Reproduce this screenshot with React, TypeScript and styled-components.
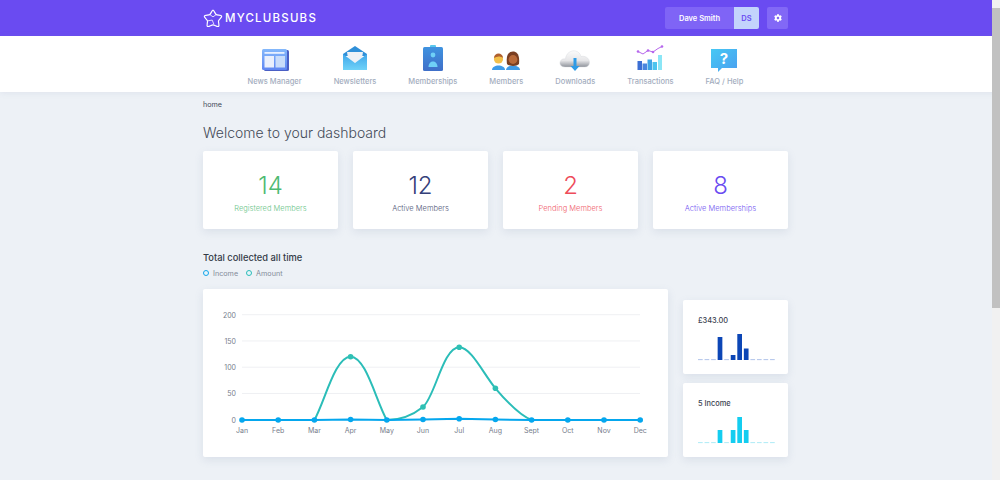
import { createGlobalStyle, styled } from "styled-components";
import { FaCog } from "react-icons/fa";

const GlobalStyle = createGlobalStyle`
  html {
    background: #edf1f6;
  }
  body {
    margin: 0;
    font-family: Inter, "Liberation Sans", sans-serif;
    color: #3b4250;
  }
`;

const Page = styled.div`
  height: 480px;
  overflow: hidden;
  padding-right: 9px;
  position: relative;
`;

const Scrollbar = styled.div`
  position: absolute;
  top: 0;
  right: 0;
  bottom: 0;
  width: 8px;
  background: #f1f1f1;
  padding-top: 8px;
  box-sizing: border-box;
`;

const ScrollThumb = styled.div`
  height: 300px;
  background: #c1c1c1;
`;

const Container = styled.div`
  width: 585px;
  margin: 0 auto;
`;

const TopBar = styled.header`
  height: 36px;
  margin-right: -9px;
  padding-right: 9px;
  background: #6a4bf1;
`;

const TopBarInner = styled(Container)`
  height: 100%;
  display: flex;
  align-items: center;
  justify-content: space-between;
`;

const Logo = styled.div`
  display: flex;
  align-items: center;
  gap: 2px;
  color: #fff;
  font-size: 11.5px;
  font-weight: 500;
  letter-spacing: 1.2px;
`;

const UserArea = styled.div`
  display: flex;
  gap: 8px;
`;

const UserButton = styled.div`
  display: flex;
  height: 22px;
  border-radius: 2px;
  overflow: hidden;
  font-size: 7.5px;
  font-weight: 600;
`;

const UserName = styled.div`
  width: 69px;
  display: flex;
  align-items: center;
  justify-content: center;
  background: #7f64f6;
  color: #fff;
`;

const UserInitials = styled.div`
  width: 25px;
  display: flex;
  align-items: center;
  justify-content: center;
  background: #c3d3fc;
  color: #6a4bf1;
`;

const GearButton = styled.div`
  width: 21px;
  height: 22px;
  border-radius: 2px;
  display: flex;
  align-items: center;
  justify-content: center;
  background: #8268f6;
  color: #fff;
  font-size: 8px;
`;

const NavBar = styled.nav`
  height: 56px;
  margin-right: -9px;
  padding-right: 9px;
  background: #fff;
  box-shadow: 0 1px 6px rgba(120, 135, 170, 0.12);
`;

const NavList = styled.div`
  height: 100%;
  display: flex;
  justify-content: center;
  gap: 32px;
`;

const NavItem = styled.div`
  display: flex;
  flex-direction: column;
  align-items: center;
  justify-content: flex-end;
  padding-bottom: 6px;
  gap: 5px;
  font-size: 7.5px;
  font-weight: 500;
  color: #a3adbe;
  white-space: nowrap;
`;

const NavIcon = styled.svg`
  display: block;
  width: 34px;
  height: 28px;
`;

const Breadcrumb = styled.div`
  padding-top: 8px;
  font-size: 7.2px;
  line-height: 10px;
  color: #444b58;
`;

const Title = styled.h1`
  margin: 12px 0 0;
  font-size: 14px;
  line-height: 22px;
  font-weight: 300;
  color: #444b58;
`;

const StatGrid = styled.div`
  display: grid;
  grid-template-columns: repeat(4, 135px);
  gap: 15px;
  margin-top: 7px;
`;

const StatCard = styled.div`
  height: 78px;
  background: #fff;
  border-radius: 2px;
  box-shadow: 0 3px 8px rgba(120, 135, 170, 0.16);
  display: flex;
  flex-direction: column;
  align-items: center;
  padding-top: 22px;
  box-sizing: border-box;
`;

const StatValue = styled.div<{ $color: string }>`
  font-size: 24px;
  line-height: 26px;
  font-weight: 300;
  color: ${(props) => props.$color};
`;

const StatLabel = styled.div<{ $color: string }>`
  margin-top: 4px;
  font-size: 7.5px;
  line-height: 12px;
  font-weight: 300;
  color: ${(props) => props.$color};
`;

const SectionTitle = styled.h2`
  margin: 22px 0 0;
  font-size: 9.3px;
  line-height: 14px;
  font-weight: 500;
  color: #333a47;
`;

const Legend = styled.div`
  display: flex;
  gap: 8px;
  margin-top: 2px;
  height: 12px;
`;

const LegendItem = styled.div`
  display: flex;
  align-items: center;
  gap: 4px;
  font-size: 7.2px;
  color: #848b99;
`;

const LegendDot = styled.span<{ $color: string }>`
  width: 4px;
  height: 4px;
  border-radius: 50%;
  border: 1.5px solid ${(props) => props.$color};
  background: #e8f4fa;
`;

const ChartRow = styled.div`
  display: flex;
  gap: 15px;
  margin-top: 10px;
`;

const ChartCard = styled.div`
  width: 465px;
  height: 168px;
  background: #fff;
  border-radius: 2px;
  box-shadow: 0 3px 8px rgba(120, 135, 170, 0.16);
`;

const ChartSvg = styled.svg`
  display: block;
  font-family: Inter, sans-serif;
  font-size: 7px;
  fill: #777e8c;
`;

const SideColumn = styled.div`
  width: 105px;
  display: flex;
  flex-direction: column;
  gap: 9px;
  padding-top: 11px;
`;

const MiniCard = styled.div`
  height: 74px;
  background: #fff;
  border-radius: 2px;
  box-shadow: 0 3px 8px rgba(120, 135, 170, 0.16);
  padding: 15px 0 0 15px;
  box-sizing: border-box;
`;

const MiniTitle = styled.div`
  font-size: 7.4px;
  line-height: 12px;
  font-weight: 500;
  color: #3b4250;
`;

const MiniSvg = styled.svg`
  display: block;
  margin-top: 6px;
`;

const months = ["Jan", "Feb", "Mar", "Apr", "May", "Jun", "Jul", "Aug", "Sept", "Oct", "Nov", "Dec"];

const monthX = (i: number) => 39 + i * 36.2;

// y positions relative to the card, read off the reference
const amountPoints = [131, 131, 131, 67.7, 131, 118, 58.3, 99.3, 131, 131, 131, 131];
const incomePoints = [131, 131, 131, 130.5, 131, 130.5, 129.7, 130.5, 131, 131, 131, 131];

const amountPath =
  "M39 131 H111.4 C122 112 132 67.7 147.6 67.7 C163 67.7 173 112 183.8 131 C197 131 210 126 220 118 " +
  "C232 108 240 58.3 256.2 58.3 C268 58.3 280 84 292.4 99.3 C304 113 318 127 328.6 131 H437";

const incomePath = `M${incomePoints.map((y, i) => `${monthX(i)} ${y}`).join(" L")}`;

function MiniBars({ bars, color, pale }: { bars: Record<number, number>; color: string; pale: string }) {
  return (
    <MiniSvg width="80" height="29">
      {months.map((month, i) =>
        bars[i] ? (
          <rect key={month} x={i * 6.55} y={27 - bars[i]} width="4.7" height={bars[i]} fill={color} />
        ) : (
          <rect key={month} x={i * 6.55} y="26.2" width="4.7" height="0.9" fill={pale} />
        )
      )}
    </MiniSvg>
  );
}

function NewsIcon() {
  return (
    <NavIcon viewBox="0 0 34 28">
      <defs>
        <linearGradient id="newsFill" x1="0" y1="0" x2="0" y2="1">
          <stop offset="0" stopColor="#84b8fb" />
          <stop offset="1" stopColor="#5f86f2" />
        </linearGradient>
      </defs>
      <rect x="6" y="6" width="25" height="21" rx="1.5" fill="#4a5fc4" />
      <rect x="4" y="5" width="25" height="21" rx="1.5" fill="url(#newsFill)" />
      <rect x="6.5" y="8" width="20" height="1.8" fill="#e8f0ff" />
      <rect x="6.5" y="12" width="9.5" height="11.5" fill="#e9effc" />
      <rect x="17.5" y="12" width="9.5" height="11.5" fill="#c8dcfa" />
    </NavIcon>
  );
}

function MailIcon() {
  return (
    <NavIcon viewBox="0 0 34 28">
      <defs>
        <linearGradient id="mailFill" x1="0" y1="0" x2="0" y2="1">
          <stop offset="0" stopColor="#3fa6ea" />
          <stop offset="1" stopColor="#6fd2f8" />
        </linearGradient>
      </defs>
      <path d="M5 10 L17 2 L29 10 V12 H5Z" fill="#2f8fd8" />
      <path d="M9 8 H25 L24 14 L17 19 L10 14Z" fill="#eef1f6" />
      <path d="M5 10 L17 19 L29 10 V26 H5Z" fill="url(#mailFill)" />
    </NavIcon>
  );
}

function BadgeIcon() {
  return (
    <NavIcon viewBox="0 0 34 28">
      <defs>
        <linearGradient id="badgeFill" x1="0" y1="0" x2="0" y2="1">
          <stop offset="0" stopColor="#3f93e0" />
          <stop offset="1" stopColor="#3f6fc8" />
        </linearGradient>
      </defs>
      <rect x="14" y="1" width="6" height="4" rx="1" fill="#5ac8ee" />
      <rect x="7" y="3" width="20" height="24" rx="1.5" fill="url(#badgeFill)" />
      <circle cx="17" cy="11" r="2.4" fill="#6fd0f6" />
      <path d="M12.5 23 C12.5 15.5 21.5 15.5 21.5 23Z" fill="#6fd0f6" />
    </NavIcon>
  );
}

function MembersIcon() {
  return (
    <NavIcon viewBox="0 0 34 28">
      <path d="M3 26 C3 20 16 20 16 26Z" fill="#3f9be8" />
      <circle cx="9.5" cy="15" r="4.6" fill="#f3c04a" />
      <path d="M5 14 C5 8 14 8 14 14 C11.5 12 8 12 5 14Z" fill="#b0602e" />
      <path d="M17 26 C17 20 31 20 31 26Z" fill="#3f9be8" />
      <path d="M18 20 C16.5 10 20.5 7.5 24 7.5 C27.5 7.5 31 10 30 20 C28 22.5 20 22.5 18 20Z" fill="#7a3f22" />
      <circle cx="24" cy="15.5" r="4.4" fill="#b96a3a" />
    </NavIcon>
  );
}

function CloudIcon() {
  return (
    <NavIcon viewBox="0 0 34 28">
      <defs>
        <linearGradient id="cloudFill" x1="0" y1="0" x2="0" y2="1">
          <stop offset="0" stopColor="#fbfbfb" />
          <stop offset="0.6" stopColor="#e6e6e8" />
          <stop offset="1" stopColor="#8f939b" />
        </linearGradient>
      </defs>
      <path
        d="M7 23 C2.5 23 1 19.5 2.5 17 C3.5 15 5.5 14.5 7.5 15 C8 9 13 6 17.5 7 C20.5 7.5 22.5 10 23 12.5 C27 11.5 31.5 14 31.5 18.5 C31.5 21 29.5 23 27 23Z"
        fill="url(#cloudFill)"
        stroke="#d5d7db"
        strokeWidth="0.4"
      />
      <path d="M15.5 14 H18.5 V22 H21.5 L17 27 L12.5 22 H15.5Z" fill="#2e9be6" />
    </NavIcon>
  );
}

function TransactionsIcon() {
  return (
    <NavIcon viewBox="0 0 34 28">
      <rect x="4.5" y="17" width="4.5" height="9" fill="#3c6fd4" />
      <rect x="9.5" y="19.5" width="4.5" height="6.5" fill="#4a86de" />
      <rect x="14.5" y="15.5" width="4.5" height="10.5" fill="#3fa4e6" />
      <rect x="19.5" y="18" width="4.5" height="8" fill="#4cc4ee" />
      <rect x="25" y="11" width="4" height="15" fill="#8be6f6" />
      <path d="M5 7.5 L10 10 L15 6.5 L20 8 L25 4.5 L29 2.5" fill="none" stroke="#b667ec" strokeWidth="1" />
      {[[5, 7.5], [15, 6.5], [20, 8], [29, 2.5]].map(([cx, cy]) => (
        <circle key={cx} cx={cx} cy={cy} r="1.3" fill="#b667ec" />
      ))}
    </NavIcon>
  );
}

function HelpIcon() {
  return (
    <NavIcon viewBox="0 0 34 28">
      <defs>
        <linearGradient id="helpFill" x1="0" y1="0" x2="1" y2="1">
          <stop offset="0" stopColor="#46c8f4" />
          <stop offset="1" stopColor="#4a9ff0" />
        </linearGradient>
      </defs>
      <path d="M4 5 H30 V24 H15 L11 28 L11 24 H4Z" fill="url(#helpFill)" />
      <text x="17" y="20" textAnchor="middle" fontSize="15" fontWeight="700" fill="#fff" fontFamily="Inter, sans-serif">
        ?
      </text>
    </NavIcon>
  );
}

function LogoMark() {
  return (
    <svg width="20" height="19" viewBox="0 0 24 24" fill="none" stroke="#fff" strokeWidth="1.5" strokeLinejoin="round">
      <path d="M12 1.5 C13.5 1.5 14.5 6 16 7 C17.5 8 22.5 7.5 23 9 C23.5 10.5 19.5 13 19 15 C18.5 17 20.5 21 19 22 C17.5 23 14 20 12 20 C10 20 6.5 23 5 22 C3.5 21 5.5 17 5 15 C4.5 13 0.5 10.5 1 9 C1.5 7.5 6.5 8 8 7 C9.5 6 10.5 1.5 12 1.5Z" />
      <path d="M8 7 L12 10 L16 7 M5 15 L11 14 L13 19" strokeWidth="1" />
    </svg>
  );
}

const navItems = [
  { label: "News Manager", icon: <NewsIcon /> },
  { label: "Newsletters", icon: <MailIcon /> },
  { label: "Memberships", icon: <BadgeIcon /> },
  { label: "Members", icon: <MembersIcon /> },
  { label: "Downloads", icon: <CloudIcon /> },
  { label: "Transactions", icon: <TransactionsIcon /> },
  { label: "FAQ / Help", icon: <HelpIcon /> },
];

const stats = [
  { value: "14", label: "Registered Members", color: "#4dba72", labelColor: "#6cc58a" },
  { value: "12", label: "Active Members", color: "#34407a", labelColor: "#4f5778" },
  { value: "2", label: "Pending Members", color: "#ee4c5a", labelColor: "#f0606c" },
  { value: "8", label: "Active Memberships", color: "#6a4bf1", labelColor: "#7357f2" },
];

function App() {
  return (
    <Page>
      <GlobalStyle />
      <TopBar>
        <TopBarInner>
          <Logo>
            <LogoMark />
            MYCLUBSUBS
          </Logo>
          <UserArea>
            <UserButton>
              <UserName>Dave Smith</UserName>
              <UserInitials>DS</UserInitials>
            </UserButton>
            <GearButton>
              <FaCog />
            </GearButton>
          </UserArea>
        </TopBarInner>
      </TopBar>
      <NavBar>
        <NavList>
          {navItems.map((item) => (
            <NavItem key={item.label}>
              {item.icon}
              {item.label}
            </NavItem>
          ))}
        </NavList>
      </NavBar>
      <Container>
        <Breadcrumb>home</Breadcrumb>
        <Title>Welcome to your dashboard</Title>
        <StatGrid>
          {stats.map((stat) => (
            <StatCard key={stat.label}>
              <StatValue $color={stat.color}>{stat.value}</StatValue>
              <StatLabel $color={stat.labelColor}>{stat.label}</StatLabel>
            </StatCard>
          ))}
        </StatGrid>
        <SectionTitle>Total collected all time</SectionTitle>
        <Legend>
          <LegendItem>
            <LegendDot $color="#12a5ea" />
            Income
          </LegendItem>
          <LegendItem>
            <LegendDot $color="#2bbdb8" />
            Amount
          </LegendItem>
        </Legend>
        <ChartRow>
          <ChartCard>
            <ChartSvg width="465" height="168">
              {[0, 1, 2, 3, 4].map((i) => (
                <g key={i}>
                  <line x1="39" x2="437" y1={25.7 + i * 26.25} y2={25.7 + i * 26.25} stroke="#eff0f3" strokeWidth="1" />
                  <text x="33" y={28.5 + i * 26.25} textAnchor="end">
                    {200 - i * 50}
                  </text>
                </g>
              ))}
              {months.map((month, i) => (
                <text key={month} x={monthX(i)} y="144" textAnchor="middle">
                  {month}
                </text>
              ))}
              <path d={amountPath} fill="none" stroke="#2bbdb8" strokeWidth="2" />
              {amountPoints.map((y, i) =>
                y < 131 ? <circle key={i} cx={monthX(i)} cy={y} r="2.8" fill="#2fc0b4" /> : null
              )}
              <path d={incomePath} fill="none" stroke="#05a7ee" strokeWidth="2" />
              {incomePoints.map((y, i) => (
                <circle key={i} cx={monthX(i)} cy={y} r="2.8" fill="#05a7ee" />
              ))}
            </ChartSvg>
          </ChartCard>
          <SideColumn>
            <MiniCard>
              <MiniTitle>£343.00</MiniTitle>
              <MiniBars bars={{ 3: 23, 5: 5, 6: 26, 7: 11.5 }} color="#0c46b6" pale="#a9bde8" />
            </MiniCard>
            <MiniCard>
              <MiniTitle>5 Income</MiniTitle>
              <MiniBars bars={{ 3: 13, 5: 13, 6: 26, 7: 13 }} color="#14cdf0" pale="#a5e9f5" />
            </MiniCard>
          </SideColumn>
        </ChartRow>
      </Container>
      <Scrollbar>
        <ScrollThumb />
      </Scrollbar>
    </Page>
  );
}

export default App;
